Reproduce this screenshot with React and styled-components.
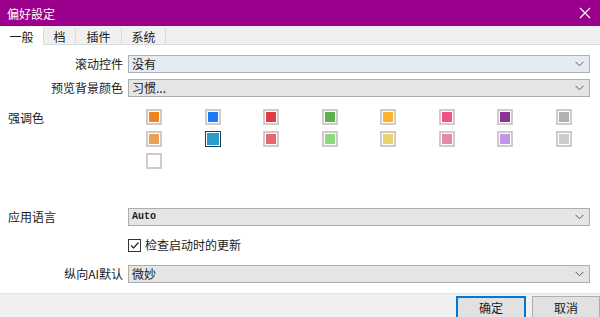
import React, { useState } from 'react';
import styled, { createGlobalStyle } from 'styled-components';

const GlobalStyle = createGlobalStyle`
    html, body {
        margin: 0;
        padding: 0;
        background: #ffffff;
    }
    body {
        font-family: "Noto Sans CJK SC", "Noto Sans", sans-serif;
        font-size: 12px;
        color: #1a1a1a;
        overflow: hidden;
    }
`;

const Window = styled.div`
    width: 600px;
    height: 317px;
    display: flex;
    flex-direction: column;
    background: #ffffff;
    overflow: hidden;
`;

const TitleBar = styled.div`
    height: 26px;
    flex: none;
    display: flex;
    align-items: center;
    justify-content: space-between;
    padding: 0 8px 0 7px;
    background: #9a008b;
    color: #ffffff;
    font-size: 12px;
`;

const CloseButton = styled.div`
    width: 14px;
    height: 14px;
    display: flex;
    align-items: center;
    justify-content: center;
`;

const TabBar = styled.div`
    height: 18px;
    flex: none;
    display: flex;
    align-items: flex-end;
    background: #f0f0f0;
    border-bottom: 1px solid #dadada;
`;

const Tab = styled.div`
    height: ${p => (p.$active ? '18px' : '16px')};
    width: ${p => p.$w}px;
    box-sizing: border-box;
    display: flex;
    align-items: center;
    justify-content: center;
    background: ${p => (p.$active ? '#ffffff' : '#f0f0f0')};
    border-right: 1px solid #dadada;
    margin-bottom: ${p => (p.$active ? '-1px' : '0')};
    font-size: 12px;
    color: #1a1a1a;
`;

const Body = styled.div`
    flex: 1;
    display: flex;
    flex-direction: column;
    padding: 10px 10px 0 8px;
`;

const Row = styled.div`
    display: grid;
    grid-template-columns: 120px 1fr;
    align-items: ${p => p.$top ? 'start' : 'center'};
    min-height: 18px;
    margin-top: ${p => p.$mt || 0}px;
`;

const Label = styled.div`
    justify-self: ${p => (p.$left ? 'start' : 'end')};
    padding-right: ${p => (p.$left ? 0 : 5)}px;
    font-size: 12px;
    line-height: 16px;
    color: #1a1a1a;
    margin-top: ${p => p.$top ? 1 : 0}px;
`;

const Select = styled.div`
    height: 18px;
    box-sizing: border-box;
    display: flex;
    align-items: center;
    justify-content: space-between;
    padding: 0 5px 0 3px;
    background: ${p => (p.$hover ? '#e5ebf1' : '#e5e5e5')};
    border: 1px solid ${p => (p.$hover ? '#a9b3bd' : '#adadad')};
    font-family: ${p => (p.$mono ? '"Liberation Mono", "DejaVu Sans Mono", monospace' : 'inherit')};
    font-size: ${p => (p.$mono ? '10px' : '12px')};
    font-weight: ${p => (p.$mono ? 700 : 400)};
    line-height: 16px;
    color: #1a1a1a;
`;

const Swatches = styled.div`
    display: grid;
    grid-template-columns: repeat(8, 16px);
    grid-auto-rows: 16px;
    column-gap: 42.5px;
    row-gap: 6px;
    padding-left: 18px;
`;

const Swatch = styled.div`
    width: 16px;
    height: 16px;
    box-sizing: border-box;
    border: ${p => (p.$selected ? '1px solid #1d3a55' : '2px solid #d2caca')};
    padding: 1px;
    background: #ffffff;

    &::after {
        content: '';
        display: block;
        width: 100%;
        height: 100%;
        background: ${p => p.$color};
    }
`;

const CheckRow = styled.label`
    display: flex;
    align-items: center;
    gap: 4px;
    height: 18px;
    font-size: 12px;
    line-height: 16px;
    color: #1a1a1a;
`;

const Box = styled.div`
    width: 13px;
    height: 13px;
    box-sizing: border-box;
    border: 1px solid #333333;
    background: #ffffff;
    display: flex;
    align-items: center;
    justify-content: center;
`;

const Footer = styled.div`
    height: 21px;
    flex: none;
    display: flex;
    justify-content: flex-end;
    align-items: flex-start;
    gap: 6px;
    padding-top: 2px;
    background: #f0f0f0;
    border-top: 1px solid #e4e4e4;
`;

const Button = styled.div`
    width: ${p => p.$w}px;
    height: 23px;
    flex: none;
    box-sizing: border-box;
    display: flex;
    align-items: center;
    justify-content: center;
    background: #e1e1e1;
    border: ${p => (p.$primary ? '2px solid #0078d7' : '1px solid #adadad')};
    font-size: 12px;
    color: #1a1a1a;
`;

const Chevron = () => (
    <svg width="9" height="6" viewBox="0 0 9 6">
        <path d="M0.5 0.8 L4.5 4.8 L8.5 0.8" fill="none" stroke="#5a5a5a" strokeWidth="1" />
    </svg>
);

const accents = [
    '#f4811f', '#1a7cf5', '#de3b47', '#5bb14a', '#fcb22d', '#f1508f', '#8a3493', '#b1b1b1',
    '#eba058', '#2d9cc6', '#e3676f', '#8ed97c', '#ebd26c', '#e48aa4', '#c196e7', '#cccccc',
    '#ffffff',
];

const tabs = [
    { name: '一般', w: 44 },
    { name: '档', w: 32 },
    { name: '插件', w: 46 },
    { name: '系统', w: 44 },
];

export default function App() {
    const [tab] = useState(0);
    const [picked] = useState(9);

    return (
        <Window>
            <GlobalStyle />
            <TitleBar>
                <span>偏好設定</span>
                <CloseButton>
                    <svg width="12" height="12" viewBox="0 0 12 12">
                        <path d="M1 1 L11 11 M11 1 L1 11" stroke="#ffffff" strokeWidth="1.2" />
                    </svg>
                </CloseButton>
            </TitleBar>
            <TabBar>
                {tabs.map((t, i) => (
                    <Tab key={t.name} $w={t.w} $active={i === tab}>{t.name}</Tab>
                ))}
            </TabBar>
            <Body>
                <Row>
                    <Label>滚动控件</Label>
                    <Select $hover>没有<Chevron /></Select>
                </Row>
                <Row $mt={6}>
                    <Label>预览背景颜色</Label>
                    <Select>习惯...<Chevron /></Select>
                </Row>
                <Row $mt={12} $top>
                    <Label $left $top>强调色</Label>
                    <Swatches>
                        {accents.map((c, i) => (
                            <Swatch key={i} $color={c} $selected={i === picked} />
                        ))}
                    </Swatches>
                </Row>
                <Row $mt={39}>
                    <Label $left>应用语言</Label>
                    <Select $mono>Auto<Chevron /></Select>
                </Row>
                <Row $mt={10}>
                    <span />
                    <CheckRow>
                        <Box>
                            <svg width="11" height="11" viewBox="0 0 11 11">
                                <path d="M2 5.5 L4.5 8 L9.5 2.5" fill="none" stroke="#222" strokeWidth="1.2" />
                            </svg>
                        </Box>
                        检查启动时的更新
                    </CheckRow>
                </Row>
                <Row $mt={11}>
                    <Label>纵向AI默认</Label>
                    <Select>微妙<Chevron /></Select>
                </Row>
            </Body>
            <Footer>
                <Button $primary $w={70}>确定</Button>
                <Button $w={68}>取消</Button>
            </Footer>
        </Window>
    );
}
